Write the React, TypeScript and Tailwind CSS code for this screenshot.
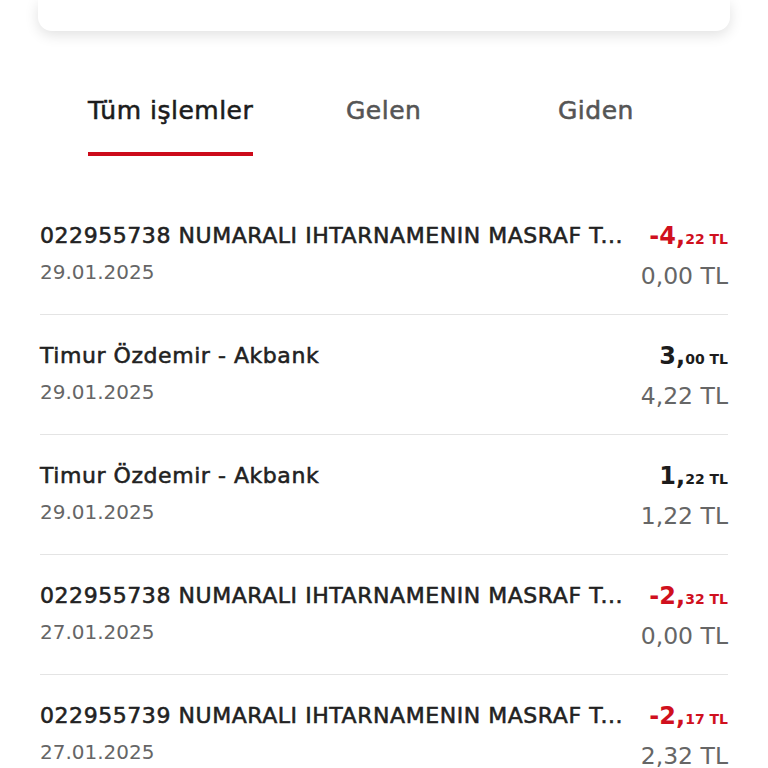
import React from "react";

type Row = { title: string; date: string; sign: string; whole: string; dec: string; neg: boolean; bal: string };

const rows: Row[] = [
  { title: "022955738 NUMARALI IHTARNAMENIN MASRAF T...", date: "29.01.2025", sign: "-", whole: "4,", dec: "22", neg: true, bal: "0,00 TL" },
  { title: "Timur Özdemir - Akbank", date: "29.01.2025", sign: "", whole: "3,", dec: "00", neg: false, bal: "4,22 TL" },
  { title: "Timur Özdemir - Akbank", date: "29.01.2025", sign: "", whole: "1,", dec: "22", neg: false, bal: "1,22 TL" },
  { title: "022955738 NUMARALI IHTARNAMENIN MASRAF T...", date: "27.01.2025", sign: "-", whole: "2,", dec: "32", neg: true, bal: "0,00 TL" },
  { title: "022955739 NUMARALI IHTARNAMENIN MASRAF T...", date: "27.01.2025", sign: "-", whole: "2,", dec: "17", neg: true, bal: "2,32 TL" },
];

export default function App() {
  return (
    <div className="w-[768px] h-[768px] overflow-hidden bg-white" style={{ fontFamily: "'DejaVu Sans', 'Open Sans', sans-serif" }}>
      <div className="px-[38px] pt-0">
        <div className="h-[31px] bg-white rounded-b-[14px] shadow-[0_4px_14px_rgba(0,0,0,0.12)]" />
      </div>
      <div className="relative h-[164px]">
        <div className="absolute left-[88px] top-[64px] flex flex-col items-start">
          <span className="text-[25px] leading-[32px] font-normal tracking-[0.5px] [-webkit-text-stroke:0.55px_#1c1c1c] text-[#1c1c1c] whitespace-nowrap">Tüm işlemler</span>
          <div className="mt-[25px] h-[4px] w-[165px] bg-[#cc0a1a]" />
        </div>
        <span className="absolute left-[346px] top-[64px] text-[25px] leading-[32px] font-normal tracking-[0.5px] [-webkit-text-stroke:0.55px_#555] text-[#555]">Gelen</span>
        <span className="absolute left-[558px] top-[64px] text-[25px] leading-[32px] font-normal tracking-[0.5px] [-webkit-text-stroke:0.55px_#555] text-[#555]">Giden</span>
      </div>
      <div className="mx-[40px]">
        {rows.map((r, i) => (
          <div key={i} className="flex justify-between border-b border-[#e4e4e4] pt-[27px] pb-[28px] h-[120px]">
            <div className="flex flex-col gap-[8px]">
              <span className="text-[22px] leading-[28px] font-normal [-webkit-text-stroke:0.55px_#222] tracking-[0.55px] text-[#222] whitespace-nowrap">{r.title}</span>
              <span className="text-[20px] leading-[28px] text-[#666]">{r.date}</span>
            </div>
            <div className="flex flex-col items-end gap-[8px]">
              <span className={`leading-[28px] whitespace-nowrap font-bold ${r.neg ? "text-[#d0101e]" : "text-[#1c1c1c]"}`}>
                <span className="text-[24px]">{r.sign}{r.whole}</span>
                <span className="text-[14px]">{r.dec} TL</span>
              </span>
              <span className="text-[23.5px] leading-[24px] text-[#666] mt-[3px]">{r.bal}</span>
            </div>
          </div>
        ))}
      </div>
    </div>
  );
}
